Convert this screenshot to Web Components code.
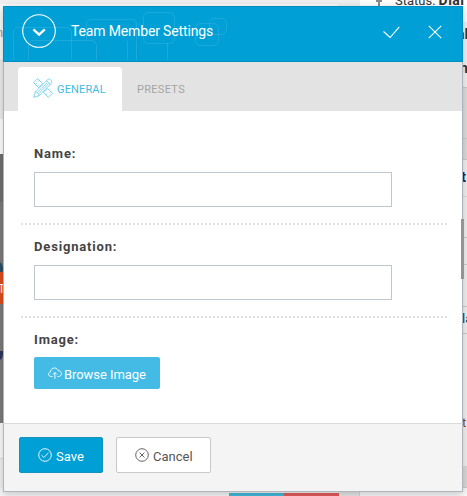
<!DOCTYPE html>
<html lang="en">
<head>
<meta charset="utf-8">
<title>Team Member Settings</title>
<style>
html,body{margin:0;padding:0}
body{position:relative;width:467px;height:496px;overflow:hidden;background:#fff;font-family:Roboto,"Open Sans",sans-serif}
settings-window{position:absolute;left:3px;top:6px;z-index:2}
page-backdrop{position:absolute;inset:0}
</style>
</head>
<body>
<page-backdrop></page-backdrop>
<settings-window>
  <window-header slot="header">Team Member Settings</window-header>
  <tab-strip slot="tabs"></tab-strip>
  <form-row label="Name:"><text-field></text-field></form-row>
  <form-row label="Designation:"><text-field></text-field></form-row>
  <form-row label="Image:" last>
    <action-button kind="browse">
      <svg slot="icon" width="14" height="13" viewBox="0 0 14 13" fill="none" stroke="#fff" stroke-width=".9"><path d="M4.5 9.5H3.2C1.7 9.5.6 8.500.6 7.200.6 6 1.400 5.200 2.500 4.900 2.600 2.700 4.200 1 6.400 1c1.900 0 3.300 1.100 3.800 2.700 1.900 0 3.200 1.200 3.200 2.900 0 1.700-1.200 2.900-2.900 2.900H9.300M6.900 11.800V5.600M4.900 7.500l2-2 2 2"/></svg>
      Browse Image
    </action-button>
  </form-row>
  <action-button slot="footer" kind="save">
    <svg slot="icon" width="14" height="14" viewBox="0 0 14 14" fill="none" stroke="#fff" stroke-width=".9"><circle cx="7" cy="7" r="6.300"/><path d="M3.500 7.200l2.400 2.300 4.600-4.800"/></svg>
    Save
  </action-button>
  <action-button slot="footer" kind="cancel">
    <svg slot="icon" width="14" height="14" viewBox="0 0 14 14" fill="none" stroke="#555" stroke-width=".9"><circle cx="7" cy="7" r="6.300"/><path d="M4.600 4.600l4.800 4.800M9.400 4.600L4.600 9.400"/></svg>
    Cancel
  </action-button>
</settings-window>
<script>
function define(name, html, setup) {
  customElements.define(name, class extends HTMLElement {
    constructor() {
      super();
      this.attachShadow({mode: 'open'}).innerHTML = html;
    }
    connectedCallback() { if (setup) setup(this); }
  });
}

/* The page that shows around the edges of the window. */
define('page-backdrop', `
<style>
:host{display:block;overflow:hidden;background:#f1f1f1}
i,b,span{position:absolute;display:block;font-style:normal;white-space:nowrap}
b,span{line-height:16px;font-size:13px;color:#333}
</style>
<i style="left:0;top:0;width:360px;height:4px;background:#efefef"></i>
<i style="left:0;top:4px;width:338px;height:55px;background:#fafafa"></i>
<i style="left:0;top:59px;width:4px;height:60px;background:#ececec"></i>
<i style="left:0;top:119px;width:4px;height:35px;background:#fff"></i>
<i style="left:0;top:154px;width:4px;height:269px;background:#7d7b7c"></i>
<i style="left:0;top:154px;width:4px;height:48px;background:#707070"></i>
<i style="left:-5px;top:262px;width:8px;height:14px;border-radius:50%;background:#2b506b"></i>
<i style="left:0;top:272px;width:4px;height:32px;background:#df4e1c"></i>
<i style="left:-3px;top:351px;width:6px;height:9px;border-radius:0 0 70% 0;background:#2c3760"></i>
<i style="left:0;top:423px;width:4px;height:35px;background:#fbfbfb"></i>
<i style="left:0;top:458px;width:4px;height:1px;background:#ddd"></i>
<i style="left:360px;top:0;width:107px;height:87px;background:#fff"></i>
<i style="left:463px;top:22px;width:4px;height:65px;background:#f2f2f2"></i>
<i style="left:463px;top:87px;width:4px;height:1px;background:#ccc"></i>
<i style="left:463px;top:88px;width:4px;height:50px;background:#dedede"></i>
<i style="left:463px;top:138px;width:4px;height:1px;background:#ccc"></i>
<i style="left:463px;top:139px;width:4px;height:20px;background:#dcdcdc"></i>
<i style="left:463px;top:159px;width:4px;height:1px;background:#ccc"></i>
<i style="left:463px;top:196px;width:4px;height:1px;background:#ddd"></i>
<i style="left:463px;top:237px;width:4px;height:1px;background:#ccc"></i>
<i style="left:463px;top:264px;width:4px;height:1px;background:#ccc"></i>
<i style="left:463px;top:306px;width:4px;height:1px;background:#ccc"></i>
<i style="left:463px;top:333px;width:4px;height:1px;background:#ccc"></i>
<i style="left:463px;top:466px;width:4px;height:21px;background:#dadada"></i>
<i style="left:463px;top:487px;width:4px;height:1px;background:#ccc"></i>
<i style="left:0;top:488px;width:359px;height:8px;background:#f7f7f7"></i>
<i style="left:339px;top:488px;width:20px;height:8px;background:#e6e6e6"></i>
<i style="left:359px;top:488px;width:108px;height:8px;background:#f9f9f9;border-left:1px solid #d5d5d5"></i>
<i style="left:229px;top:493px;width:55px;height:3px;background:#43b9dc"></i>
<i style="left:284px;top:493px;width:55px;height:3px;background:#e35b5b"></i>
<i style="left:378px;top:0;width:2px;height:6px;background:#888b8d"></i>
<i style="left:376px;top:0;width:6px;height:2px;background:#888b8d"></i>
<span style="left:395px;top:-8px">Status: <strong style="font-size:14px;letter-spacing:.5px">Dial</strong></span>
<span style="left:-4px;top:25px;color:#999">n</span>
<b style="left:457px;top:26px;font-size:14px">al</b>
<b style="left:460px;top:60px;font-size:14px">n</b>
<b style="left:461px;top:169px;font-size:15px;color:#1d3347">t</b>
<span style="left:462px;top:311px;color:#24354f">la</span>
<span style="left:462px;top:415px;color:#8b4b2c">t</span>
<span style="left:-2px;top:281px;color:#fff;font-size:12px">T</span>
`);

define('settings-window', `
<style>
:host{display:grid;grid-template-rows:56px 49px 1fr 69px;box-sizing:border-box;width:460px;height:486px;background:#fff;box-shadow:0 2px 8px rgba(0,0,0,.22)}
main{border:solid #adb5bc;border-width:0 1px;padding:21px 0 0 17px;display:flex;flex-direction:column}
footer{box-sizing:border-box;border:1px solid #b0b7bc;border-top-color:#dadada;background:#f4f4f4;padding:13px 0 0 15px;display:flex;gap:13px;align-items:flex-start}
.bar{position:absolute;right:-1px;top:213px;width:3px;height:60px;background:#949494}
</style>
<slot name="header"></slot><slot name="tabs"></slot>
<main><slot></slot></main>
<footer><slot name="footer"></slot></footer>
<div class="bar"></div>`);

define('window-header', `
<style>
:host{position:relative;display:flex;align-items:center;box-sizing:border-box;height:56px;padding:0 20px 4px 18px;background:#00a0d6;border:1px solid #008fc0;color:#fff}
.art{position:absolute;left:-1px;top:-1px}
.ring,.tick,.cross,h1{position:relative}
h1{margin:0 0 2px 15px;font-size:14px;font-weight:400;line-height:20px;flex:1;white-space:nowrap;letter-spacing:-.15px}
.tick{margin-right:28px}
svg{display:block;flex:none}
.ring{margin-bottom:2px}
</style>
<svg class="art" width="240" height="54" viewBox="3 6 240 54" fill="none" stroke="#fff" stroke-opacity=".1"><path d="M13.500 60V32.500a5 5 0 0 1 5-5H66.500a5 5 0 0 1 5 5V60M28.500 60V45.500a5 5 0 0 1 5-5H91.500a5 5 0 0 1 5 5V60M86.500 40V24.500a5 5 0 0 1 5-5H131.500a5 5 0 0 1 5 5V60M127.500 60V40.500M167.500 60V43"/><rect x="143.500" y="12.500" width="31" height="31" rx="5"/><rect x="195.500" y="23.500" width="23" height="22" rx="5"/><rect x="209.500" y="18.500" width="17" height="16" rx="5"/></svg>
<svg class="ring" width="34" height="34" viewBox="0 0 34 34" fill="none" stroke="#fff"><circle cx="17" cy="17" r="16.300" stroke-width="1.100"/><path d="M11.400 15.300l5.700 5.400 5.700-5.400" stroke-width="2.300"/></svg>
<h1><slot></slot></h1>
<svg class="tick" width="17" height="13" viewBox="0 0 17 13" fill="none" stroke="#fff" stroke-width="1.100"><path d="M.5 5.500l6.600 6L16.300.8"/></svg>
<svg class="cross" width="14" height="14" viewBox="0 0 14 14" fill="none" stroke="#fff" stroke-width="1.100"><path d="M.8.8l12.400 12.400M13.200.8L.8 13.200"/></svg>`);

define('tab-strip', `
<style>
:host{display:flex;align-items:flex-end;box-sizing:border-box;height:49px;background:#e3e3e3;border:solid #adb5bc;border-width:0 1px;padding-left:14px;font-size:11px;line-height:16px}
div{display:flex;align-items:center;box-sizing:border-box;height:44px}
.on{width:104px;padding-left:15px;gap:4px;background:#fff;border-radius:4px 4px 0 0;color:#43bbe0}
.on span{padding-top:2px;letter-spacing:.15px}
.on svg{position:relative;top:-1px}
.off{padding:2px 0 0 15px;color:#a5a5a5;letter-spacing:.3px}
</style>
<div class="on"><svg width="20" height="20" viewBox="0 0 20 20" fill="none" stroke="#54c1e4" stroke-width=".7" stroke-linejoin="round"><path d="M.6 4.600L4.600.6l5 5-4 4zM10.600 14.600l4-4 5 4.500-4.200 4.300zM2.500 6.200l1.400-1.300M4.300 8.100l1.400-1.300M6.300 2.400L5 3.700M13 16.800l1.200-1.300M17.800 13.400l-1.300 1.300"/><path fill="#fff" d="M.6 19.400l1.700-5.500L14.800 1.500c1.800-1.700 5.300 1.700 3.700 3.700L6.100 17.700zM2.300 13.900c1.700 0 3.800 2 3.800 3.800M13.300 3c1.500.200 3.500 2.100 3.700 3.700M4.300 14.400L14.400 4.500M5.600 15.800L15.700 5.800"/></svg><span>GENERAL</span></div>
<div class="off">PRESETS</div>`);

define('form-row', `
<style>
:host{display:block;box-sizing:border-box;height:93px;padding:12px 0 0 13px;width:427px;
background:repeating-linear-gradient(90deg,#e1e1e1 0 2px,transparent 2px 4px) left bottom/427px 2px no-repeat}
:host([last]){background:none}
:host([last]) label{margin-bottom:7px}
label{display:block;height:20px;line-height:20px;margin-bottom:8px;font-size:13px;font-weight:700;letter-spacing:.83px;color:#444}
</style>
<label></label><slot></slot>`, el => {
  el.shadowRoot.querySelector('label').textContent = el.getAttribute('label');
});

define('text-field', `
<style>
:host{display:block;width:358px;height:35px}
input{display:block;box-sizing:border-box;width:100%;height:100%;margin:0;padding:0 10px;border:1px solid #bdc7cf;background:#fff;outline:0;font:13px Roboto,sans-serif}
</style><input type="text">`);

define('action-button', `
<style>
:host{display:block}
button{display:flex;align-items:center;box-sizing:border-box;width:100%;height:100%;margin:0;border:0;border-radius:2px;font:13px/20px Roboto,sans-serif;white-space:nowrap;color:#fff}
:host([kind=browse]){width:126px;height:32px}
:host([kind=browse]) button{background:#43bbe4;padding:2px 0 0 14px;gap:2px;letter-spacing:-.06px}
:host([kind=save]){width:84px;height:36px}
:host([kind=save]) button{background:#00a0d6;border:1px solid #1593bf;padding:2px 0 0 18px;gap:4px}
:host([kind=cancel]){width:95px;height:36px}
:host([kind=cancel]) button{background:#fff;border:1px solid #c8c8c8;padding:2px 0 0 18px;gap:4px;color:#555}
span{padding-top:2px}
::slotted(svg){display:block;position:relative;top:-1px}
</style>
<button type="button"><slot name="icon"></slot><span><slot></slot></span></button>`);
</script>
</body>
</html>
